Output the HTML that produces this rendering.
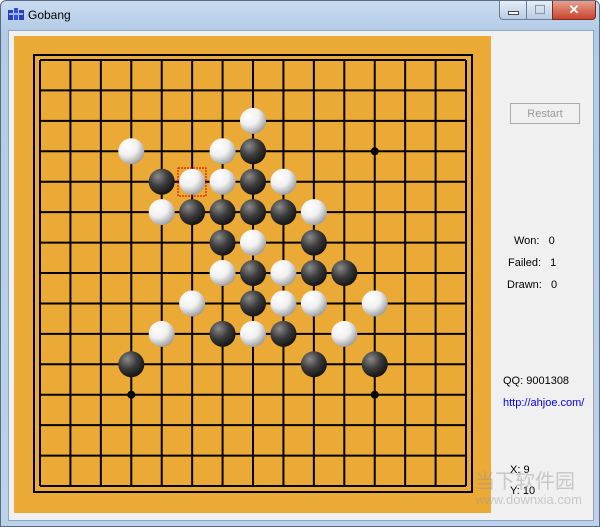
<!DOCTYPE html>
<html><head><style>
body{margin:0;width:600px;height:527px;overflow:hidden;font-family:"Liberation Sans",sans-serif;}
.win{position:absolute;left:0;top:0;width:598px;height:525px;border:1px solid #5a6c80;border-radius:6px 6px 0 0;background:linear-gradient(#c9dcf1,#b3cbe6 30px,#bcd2ea);}
.client{position:absolute;left:7px;top:29px;width:584px;height:489px;background:#f0f0f0;border:1px solid #8fa6c0;}
.t{position:absolute;font-size:11px;color:#000;}
</style></head><body>
<div class="win">
<svg style="position:absolute;left:6px;top:6px" width="18" height="16"><rect x="1" y="3" width="5" height="10" fill="#2a3fc0"/><rect x="7" y="1" width="4" height="12" fill="#3050e0"/><rect x="12" y="3" width="5" height="10" fill="#2a3fc0"/><rect x="2" y="6" width="14" height="2" fill="#9fb4ff"/></svg>
<div style="position:absolute;left:27px;top:7px;font-size:12px;color:#000;">Gobang</div>
<div style="position:absolute;left:498px;top:0;width:26px;height:18px;border:1px solid #6a7f98;border-top:none;border-radius:0 0 0 4px;background:linear-gradient(#e6eef8,#b9cbe2);"><div style="position:absolute;left:8px;top:10px;width:9px;height:2px;background:#fff;border:1px solid #445"></div></div>
<div style="position:absolute;left:525px;top:0;width:25px;height:18px;border:1px solid #6a7f98;border-top:none;background:linear-gradient(#e6eef8,#b9cbe2);"><div style="position:absolute;left:8px;top:4px;width:8px;height:7px;border:1px solid #8898aa"></div></div>
<div style="position:absolute;left:551px;top:0;width:42px;height:18px;border:1px solid #7a2a22;border-top:none;border-radius:0 0 4px 0;background:linear-gradient(#e8a090,#c8442c);color:#fff;font-weight:bold;font-size:13px;text-align:center;line-height:17px;">✕</div>
<div class="client"></div>
</div>
<svg style="position:absolute;left:0;top:0" width="600" height="527">
<rect x="14" y="36" width="477" height="477" fill="#eba936"/>
<rect x="34" y="55" width="438" height="437" fill="none" stroke="#000" stroke-width="2"/>
<g id="grid" stroke="#000" stroke-width="2"></g>
<g id="st"></g>
<defs>
<radialGradient id="w" cx="0.35" cy="0.3" r="0.75"><stop offset="0" stop-color="#fff"/><stop offset="0.5" stop-color="#f0f0f0"/><stop offset="1" stop-color="#9a9a9a"/></radialGradient>
<radialGradient id="b" cx="0.35" cy="0.3" r="0.75"><stop offset="0" stop-color="#8a8a8a"/><stop offset="0.5" stop-color="#3c3c3c"/><stop offset="1" stop-color="#111"/></radialGradient>
</defs>
<rect x="178" y="168" width="28" height="28" fill="none" stroke="#d00" stroke-width="1" stroke-dasharray="2,1"/>
<rect x="510.5" y="103.5" width="69" height="20" fill="#f0f0f0" stroke="#aaa"/>
<text x="545" y="117" font-size="11" fill="#999" text-anchor="middle" font-family="Liberation Sans">Restart</text>
</svg>
<script>
var g=document.getElementById('grid'),s=document.getElementById('st'),h='';
function X(i){return 40+i*30.43}
for(var i=0;i<15;i++){h+='<line x1="'+X(i)+'" y1="60" x2="'+X(i)+'" y2="486"/><line x1="40" y1="'+X(i)+'" x2="466" y2="'+X(i)+'" transform="translate(0,20)"/>';}
g.innerHTML=h;
var p='';
[[3,11],[11,11],[11,3],[7,7]].forEach(function(a){p+='<circle cx="'+X(a[0])+'" cy="'+(X(a[1])+20)+'" r="4" fill="#000"/>';});
var W=[[7,2],[3,3],[6,3],[5,4],[6,4],[8,4],[4,5],[9,5],[7,6],[6,7],[8,7],[5,8],[8,8],[9,8],[11,8],[4,9],[7,9],[10,9]];
var B=[[7,3],[4,4],[7,4],[5,5],[6,5],[7,5],[8,5],[6,6],[9,6],[7,7],[9,7],[10,7],[7,8],[6,9],[8,9],[3,10],[9,10],[11,10]];
W.forEach(function(a){p+='<circle cx="'+X(a[0])+'" cy="'+(X(a[1])+20)+'" r="13" fill="url(#w)"/>';});
B.forEach(function(a){p+='<circle cx="'+X(a[0])+'" cy="'+(X(a[1])+20)+'" r="13" fill="url(#b)"/>';});
s.innerHTML=p;
</script>
<div class="t" style="left:514px;top:235px">Won:&nbsp;&nbsp;&nbsp;0</div>
<div class="t" style="left:508px;top:257px">Failed:&nbsp;&nbsp;&nbsp;1</div>
<div class="t" style="left:507px;top:279px">Drawn:&nbsp;&nbsp;&nbsp;0</div>
<div class="t" style="left:503px;top:375px">QQ: 9001308</div>
<div class="t" style="left:503px;top:397px;color:#0000ee">http://ahjoe.com/</div>
<div class="t" style="left:510px;top:464px">X: 9</div>
<div class="t" style="left:510px;top:485px">Y: 10</div>
<div style="position:absolute;left:475px;top:465px;font-size:20px;color:rgba(150,150,150,0.45);font-family:'Liberation Sans','Noto Sans CJK SC',sans-serif;">当下软件园</div>
<div style="position:absolute;left:475px;top:492px;font-size:13px;color:rgba(150,150,150,0.45);">www.downxia.com</div>
</body></html>
